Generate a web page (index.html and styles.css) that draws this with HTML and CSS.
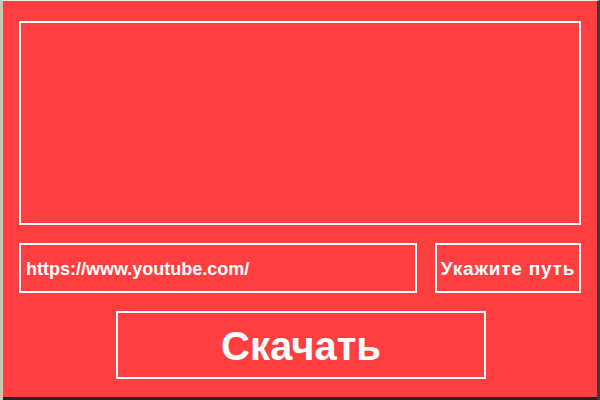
FILE: index.html
```html
<!DOCTYPE html>
<html lang="ru">
<head>
<meta charset="utf-8">
<title>Downloader</title>
<link rel="stylesheet" href="styles.css">
</head>
<body>
<div class="desktop">
  <div class="window">
    <div class="preview"></div>
    <div class="row">
      <div class="field">https://www.youtube.com/</div>
      <div class="btn-path">Укажите путь</div>
    </div>
    <div class="download-row">
      <div class="btn-download">Скачать</div>
    </div>
  </div>
</div>
</body>
</html>
```

FILE: styles.css
```css
html, body {
  margin: 0;
  padding: 0;
}
body {
  width: 600px;
  height: 400px;
  overflow: hidden;
  background: #1b2826;
  font-family: "Liberation Sans", Arial, sans-serif;
  font-weight: bold;
  color: #fff;
}
.desktop {
  box-sizing: border-box;
  width: 600px;
  height: 400px;
  border-left: 3px solid #c8c8b2;
  border-top: 1px solid #ececec;
  border-right: 3px solid #3b3b3b;
  background: #1b2826;
}
.window {
  box-sizing: border-box;
  height: 396px;
  background: #ff3f3f;
  padding: 20px 16px 0 16px;
  display: flex;
  flex-direction: column;
  gap: 18px;
}
.preview {
  box-sizing: border-box;
  height: 204px;
  border: 2px solid #fff;
}
.row {
  display: flex;
  gap: 18px;
}
.field {
  box-sizing: border-box;
  width: 398px;
  height: 50px;
  border: 2px solid #fff;
  display: flex;
  align-items: center;
  padding: 2px 0 0 5px;
  font-size: 18px;
}
.btn-path {
  box-sizing: border-box;
  width: 146px;
  height: 50px;
  border: 2px solid #fff;
  display: flex;
  align-items: center;
  justify-content: center;
  padding-top: 2px;
  font-size: 19px;
  letter-spacing: 0.8px;
  white-space: nowrap;
}
.download-row {
  display: flex;
  padding-left: 97px;
}
.btn-download {
  box-sizing: border-box;
  width: 370px;
  height: 68px;
  border: 2px solid #fff;
  display: flex;
  align-items: center;
  justify-content: center;
  padding-top: 2px;
  font-size: 40px;
}
```
